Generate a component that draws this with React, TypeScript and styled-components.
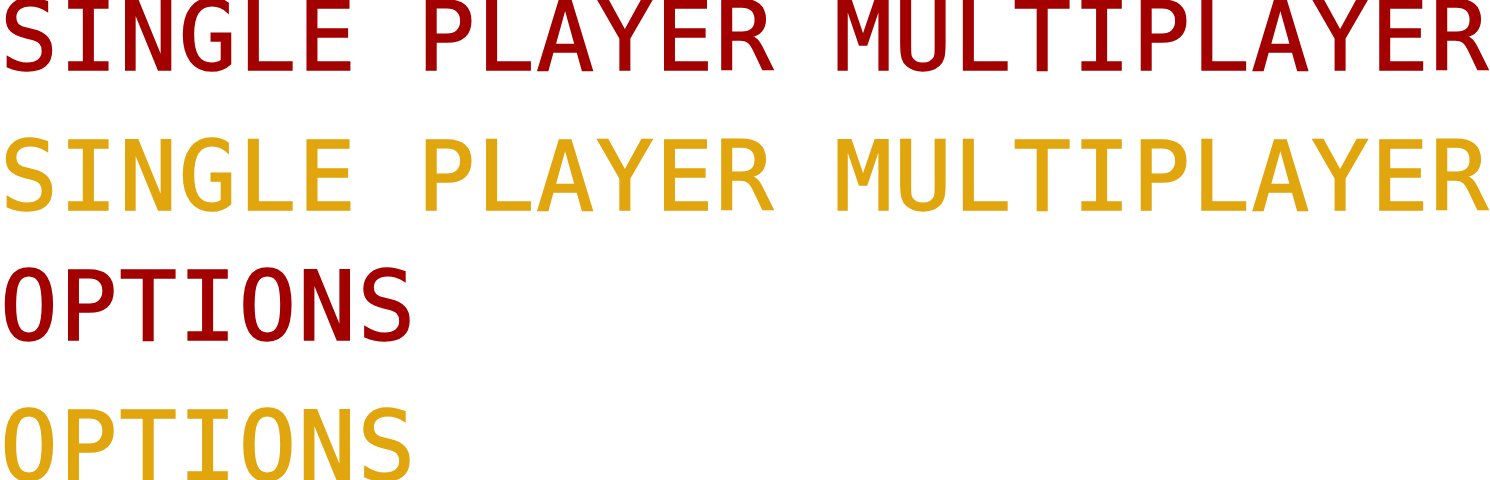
import React from "react";
import styled, { createGlobalStyle } from "styled-components";

const GlobalStyle = createGlobalStyle`
  html, body {
    margin: 0;
    padding: 0;
    background: #ffffff;
  }
  body {
    width: 1490px;
    height: 480px;
    overflow: hidden;
  }
`;

type Tone = "idle" | "active";

const toneColor: Record<Tone, string> = {
  idle: "#a30000",
  active: "#e1a50e",
};

const rows: { label: string; tone: Tone; gap: number }[] = [
  { label: "SINGLE PLAYER MULTIPLAYER", tone: "idle", gap: 0 },
  { label: "SINGLE PLAYER MULTIPLAYER", tone: "active", gap: 70 },
  { label: "OPTIONS", tone: "idle", gap: 60 },
  { label: "OPTIONS", tone: "active", gap: 70 },
];

export default function App() {
  return (
    <>
      <GlobalStyle />
      <Menu>
        {rows.map((row, i) => (
          <MenuLabel key={i} $tone={row.tone} $gap={row.gap}>
            {row.label}
          </MenuLabel>
        ))}
      </Menu>
    </>
  );
}

const Menu = styled.div`
  display: flex;
  flex-direction: column;
  align-items: flex-start;
  width: 1490px;
`;

// block-letter labels, ~60px per character cell, 70px cap height
const MenuLabel = styled.div<{ $tone: Tone; $gap: number }>`
  margin-top: ${(p) => p.$gap}px;
  height: 70px;
  padding-top: 2px;
  box-sizing: border-box;
  line-height: 70px;
  font-family: "DejaVu Sans Mono", "Liberation Mono", monospace;
  font-size: 96px;
  letter-spacing: 1.8px;
  white-space: pre;
  color: ${(p) => toneColor[p.$tone]};
  -webkit-text-stroke: 1.5px ${(p) => toneColor[p.$tone]};
`;
